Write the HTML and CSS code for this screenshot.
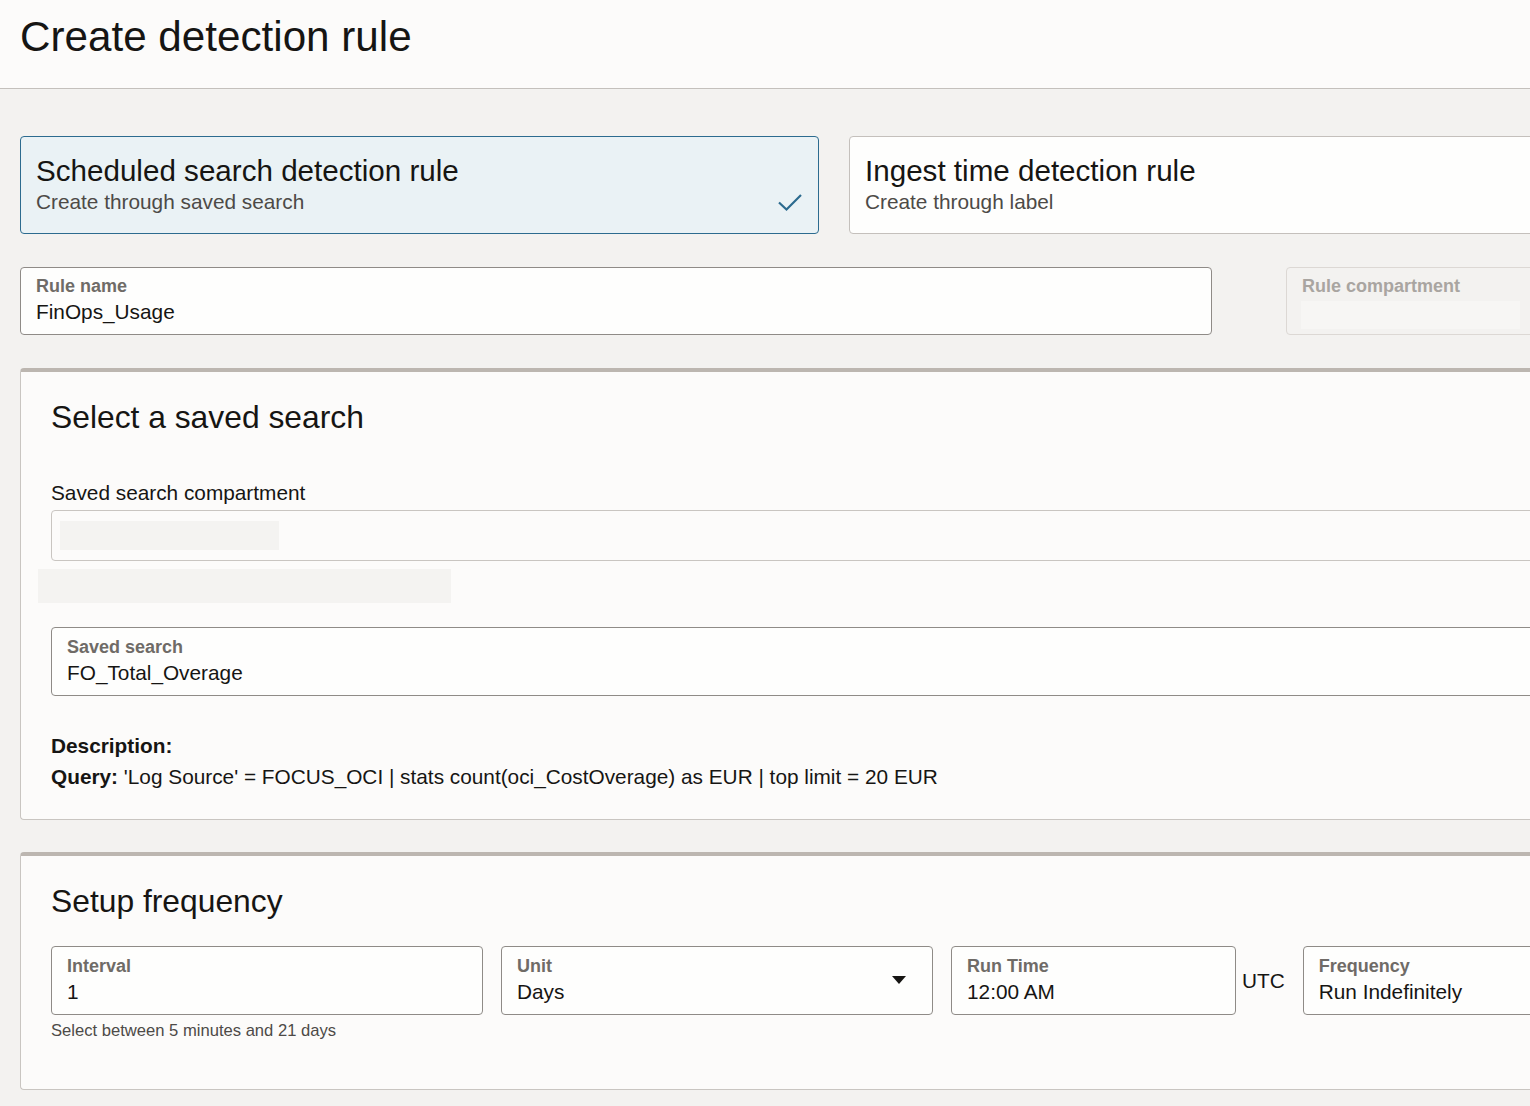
FILE: index.html
```html
<!DOCTYPE html>
<html lang="en">
<head>
<meta charset="utf-8">
<title>Create detection rule</title>
<link rel="stylesheet" href="styles.css">
</head>
<body>
<div class="viewport">
<header class="page-header">
  <h1 class="page-title">Create detection rule</h1>
</header>
<main class="page-main">
  <div class="type-row">
    <div class="type-card type-card--selected">
      <div class="type-title">Scheduled search detection rule</div>
      <div class="type-sub">Create through saved search</div>
      <svg class="type-check" width="26" height="20" viewBox="0 0 26 20"><path d="M2 9.5 L9.5 16.5 L24 2" fill="none" stroke="currentColor" stroke-width="2.2"/></svg>
    </div>
    <div class="type-card">
      <div class="type-title">Ingest time detection rule</div>
      <div class="type-sub">Create through label</div>
    </div>
  </div>

  <div class="name-row">
    <div class="field field--name">
      <div class="field-label">Rule name</div>
      <div class="field-value">FinOps_Usage</div>
    </div>
    <div class="field field--disabled field--compartment">
      <div class="field-label">Rule compartment</div>
      <div class="skeleton skeleton--compartment"></div>
    </div>
  </div>

  <section class="panel">
    <h2 class="panel-title">Select a saved search</h2>
    <div class="plain-label">Saved search compartment</div>
    <div class="plain-input">
      <div class="skeleton skeleton--input"></div>
    </div>
    <div class="skeleton skeleton--below"></div>
    <div class="field field--search">
      <div class="field-label">Saved search</div>
      <div class="field-value">FO_Total_Overage</div>
    </div>
    <div class="desc-line desc-first"><b>Description:</b></div>
    <div class="desc-line"><b>Query:</b> 'Log Source' = FOCUS_OCI | stats count(oci_CostOverage) as EUR | top limit = 20 EUR</div>
  </section>

  <section class="panel panel--freq">
    <h2 class="panel-title">Setup frequency</h2>
    <div class="freq-row">
      <div class="freq-col">
        <div class="field field--interval">
          <div class="field-label">Interval</div>
          <div class="field-value">1</div>
        </div>
        <div class="helper">Select between 5 minutes and 21 days</div>
      </div>
      <div class="field field--unit">
        <div class="field-label">Unit</div>
        <div class="field-value">Days</div>
        <svg class="dropdown-arrow" width="14" height="8" viewBox="0 0 14 8"><path d="M0 0 H14 L7 8 Z" fill="#161513"/></svg>
      </div>
      <div class="field field--time">
        <div class="field-label">Run Time</div>
        <div class="field-value">12:00 AM</div>
      </div>
      <div class="utc">UTC</div>
      <div class="field field--frequency">
        <div class="field-label">Frequency</div>
        <div class="field-value">Run Indefinitely</div>
      </div>
    </div>
  </section>
</main>
</div>
</body>
</html>
```

FILE: styles.css
```css
html, body {
  margin: 0;
  padding: 0;
}
body {
  background: #f3f2f0;
  font-family: "Liberation Sans", Arial, Helvetica, sans-serif;
  color: #161513;
}
.viewport {
  width: 1530px;
  height: 1106px;
  overflow: hidden;
}
.page-header {
  background: #fcfbfa;
  height: 88px;
  border-bottom: 1px solid #c4c0bc;
  box-sizing: content-box;
}
.page-title {
  margin: 0;
  padding: 12px 0 0 20px;
  font-size: 42.2px;
  line-height: 50px;
  font-weight: 400;
  color: #161513;
  white-space: nowrap;
}
.page-main {
  padding: 47px 0 0 20px;
  width: 1640px;
}
.type-row {
  display: flex;
  gap: 30px;
}
.type-card {
  position: relative;
  box-sizing: border-box;
  width: 799px;
  height: 98px;
  padding: 17px 15px 16px 15px;
  background: #fefefd;
  border: 1px solid #c4c0bc;
  border-radius: 4px;
}
.type-card--selected {
  background: #eaf2f5;
  border-color: #2c6b8f;
}
.type-title {
  font-size: 29.6px;
  line-height: 34px;
  color: #161513;
  white-space: nowrap;
}
.type-sub {
  font-size: 20.8px;
  line-height: 28px;
  color: #4d4a47;
  white-space: nowrap;
}
.type-check {
  position: absolute;
  right: 15px;
  top: 56px;
  color: #2c6b8f;
}
.name-row {
  display: flex;
  margin-top: 33px;
  gap: 74px;
}
.field {
  position: relative;
  box-sizing: border-box;
  height: 68px;
  padding: 8px 15px 6px 15px;
  border: 1px solid #8f8b87;
  border-radius: 4px;
  background: #fefefd;
}
.field-label {
  font-size: 18px;
  line-height: 20px;
  font-weight: 700;
  color: #6f6b67;
  white-space: nowrap;
}
.field-value {
  font-size: 20.8px;
  line-height: 32px;
  color: #161513;
  white-space: nowrap;
}
.field--name {
  width: 1192px;
}
.field--compartment {
  width: 360px;
}
.field--disabled {
  background: #f3f2f0;
  border-color: #dcd8d4;
}
.field--disabled .field-label {
  color: #a9a5a1;
}
.skeleton {
  background: #f4f3f1;
}
.skeleton--compartment {
  width: 219px;
  height: 28px;
  margin-top: 5px;
  margin-left: -1px;
  background: #f7f6f4;
}
.panel {
  margin-top: 33px;
  box-sizing: border-box;
  background: #fcfbfa;
  border-top: 4px solid #bcb6b0;
  border-left: 1px solid #c9c5c1;
  border-bottom: 1px solid #c9c5c1;
  border-radius: 4px 0 0 4px;
  padding: 27px 0 27px 30px;
  width: 1620px;
}
.panel-title {
  margin: 0;
  font-size: 31.8px;
  line-height: 36px;
  font-weight: 400;
  color: #161513;
  white-space: nowrap;
}
.plain-label {
  margin-top: 45px;
  font-size: 20.8px;
  line-height: 26px;
  color: #161513;
}
.plain-input {
  margin-top: 4px;
  box-sizing: border-box;
  height: 51px;
  border: 1px solid #c9c5c1;
  border-radius: 4px;
  padding: 10px 0 0 8px;
  background: #fcfbfa;
}
.skeleton--input {
  width: 219px;
  height: 29px;
}
.skeleton--below {
  margin: 8px 0 0 -13px;
  width: 413px;
  height: 34px;
}
.field--search {
  margin-top: 24px;
  height: 69px;
  padding-top: 9px;
}
.desc-line {
  font-size: 20.8px;
  line-height: 31px;
  color: #161513;
  white-space: nowrap;
}
.desc-first {
  margin-top: 34px;
}
.panel--freq {
  margin-top: 32px;
  padding-bottom: 48px;
}
.freq-row {
  display: flex;
  align-items: flex-start;
  gap: 18px;
  margin-top: 27px;
}
.freq-row .field {
  height: 69px;
  padding-top: 9px;
}
.field--interval {
  width: 432px;
}
.field--unit {
  width: 432px;
}
.field--time {
  width: 285px;
}
.field--frequency {
  width: 300px;
}
.dropdown-arrow {
  position: absolute;
  right: 26px;
  top: 29px;
}
.helper {
  margin-top: 6px;
  font-size: 16.6px;
  line-height: 20px;
  color: #4d4a47;
  white-space: nowrap;
}
.utc {
  font-size: 20.8px;
  line-height: 26px;
  margin: 22px 0 0 -12px;
  color: #161513;
}
```
